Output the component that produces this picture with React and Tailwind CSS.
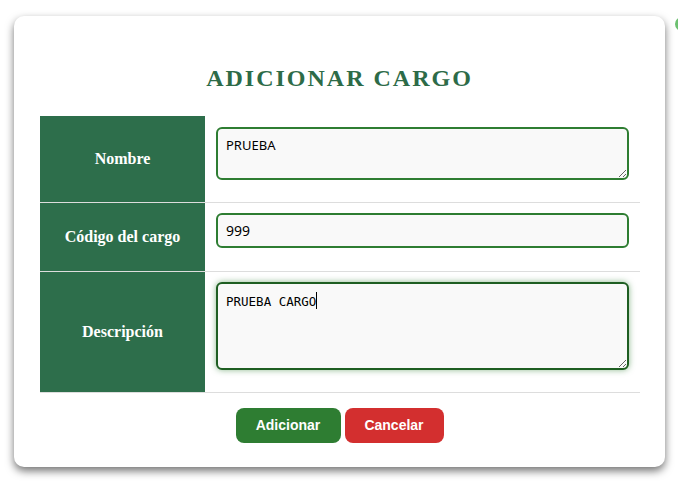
import React from "react";

export default function App() {
  const serif = { fontFamily: '"Liberation Serif", "Times New Roman", serif' };
  return (
    <div className="relative w-[678px] h-[502px] overflow-hidden bg-white pt-[16px] pl-[14px]">
      <div className="absolute left-[675px] top-[17px] w-[14px] h-[14px] rounded-full bg-[#6cc070]" />
      <div className="w-[651px] rounded-[10px] bg-white shadow-[0_4px_8px_rgba(0,0,0,0.55)] pt-[48px] pb-[24px] px-[26px]">
        <h1
          className="text-center text-[24px] leading-[28px] font-bold tracking-[2px] text-[#2d6b48]"
          style={serif}
        >
          ADICIONAR CARGO
        </h1>
        <div className="mt-[24px] w-[600px]">
          <div className="grid grid-cols-[165px_1fr] border-b border-[#dddddd]">
            <div className="bg-[#2d6e4b] flex items-center justify-center text-white font-bold text-[16px]" style={serif}>
              Nombre
            </div>
            <div className="pt-[11px] pb-[22px] px-[11px]">
              <textarea
                readOnly
                defaultValue="PRUEBA"
                className="block w-full h-[53px] rounded-[6px] border-2 border-[#2e7d32] bg-[#f9f9f9] pt-[7px] px-[8px] text-[13px] text-black outline-none"
                style={{ fontFamily: '"Noto Sans", "Open Sans", sans-serif' }}
              />
            </div>
          </div>
          <div className="grid grid-cols-[165px_1fr] border-b border-[#dddddd]">
            <div className="bg-[#2d6e4b] flex items-center justify-center text-white font-bold text-[16px]" style={serif}>
              Código del cargo
            </div>
            <div className="pt-[10px] pb-[23px] px-[11px]">
              <input
                readOnly
                defaultValue="999"
                className="block w-full h-[35px] rounded-[6px] border-2 border-[#2e7d32] bg-[#f9f9f9] px-[8px] text-[14px] text-black outline-none"
                style={{ fontFamily: '"Noto Sans", "Open Sans", sans-serif' }}
              />
            </div>
          </div>
          <div className="grid grid-cols-[165px_1fr] border-b border-[#dddddd]">
            <div className="bg-[#2d6e4b] flex items-center justify-center text-white font-bold text-[16px]" style={serif}>
              Descripción
            </div>
            <div className="pt-[10px] pb-[22px] px-[11px]">
              <div className="relative">
                <textarea
                  readOnly
                  defaultValue="PRUEBA CARGO"
                  className="block w-full h-[88px] rounded-[6px] border-2 border-[#1e5e22] bg-[#f9f9f9] pt-[9px] px-[8px] text-[12.5px] text-black outline-none shadow-[0_0_6px_rgba(46,125,50,0.55)]"
                  style={{ fontFamily: '"DejaVu Sans Mono", "Liberation Mono", monospace' }}
                />
                <span className="absolute left-[100px] top-[10px] w-[1px] h-[17px] bg-black" />
              </div>
            </div>
          </div>
        </div>
        <div
          className="mt-[15px] flex justify-center gap-[4px]"
          style={{ fontFamily: '"Liberation Sans", Arial, sans-serif' }}
        >
          <button className="h-[35px] w-[105px] rounded-[8px] bg-[#2e7d32] text-white font-bold text-[14px]">
            Adicionar
          </button>
          <button className="h-[35px] w-[99px] rounded-[8px] bg-[#d32f2f] text-white font-bold text-[14px]">
            Cancelar
          </button>
        </div>
      </div>
    </div>
  );
}
